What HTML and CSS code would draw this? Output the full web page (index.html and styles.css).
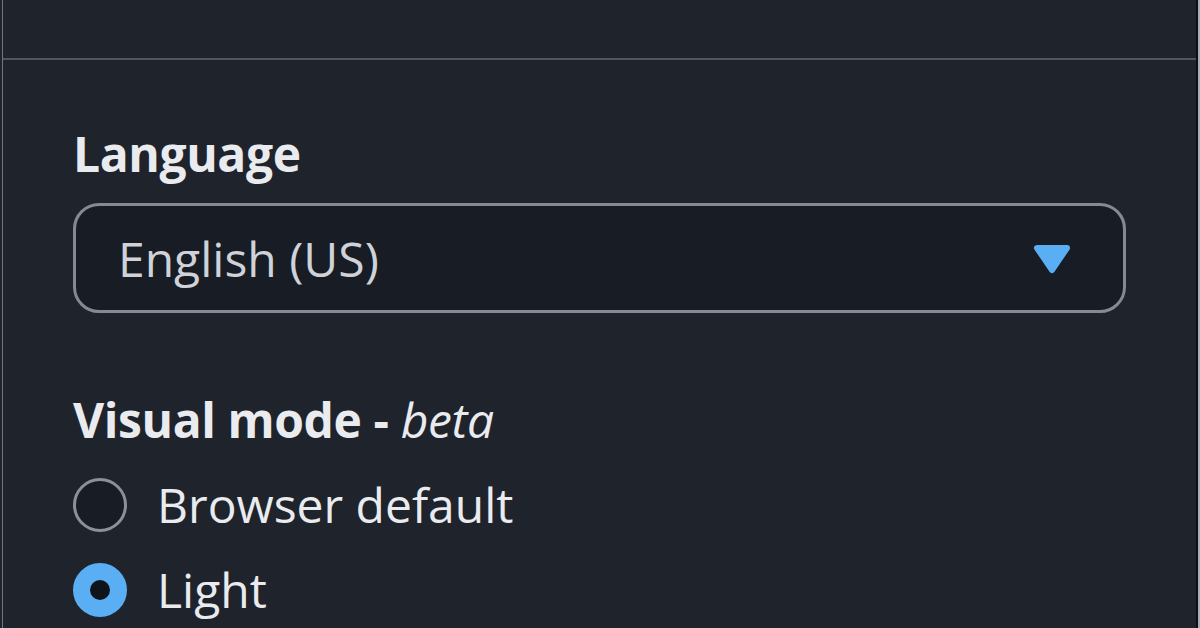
FILE: index.html
```html
<!DOCTYPE html>
<html lang="en">
<head>
<meta charset="utf-8">
<link rel="stylesheet" href="styles.css">
</head>
<body>
<div class="frame">
  <div class="gutter-left"></div>
  <div class="panel">
    <div class="panel-header"></div>
    <div class="panel-body">
      <div class="field">
        <div class="label">Language</div>
        <div class="select">
          <span class="select-value">English (US)</span>
          <svg class="caret" width="38" height="30" viewBox="0 0 38 30">
            <polygon points="4,4 34,4 19,26" fill="#5aaef3" stroke="#5aaef3" stroke-width="6" stroke-linejoin="round"/>
          </svg>
        </div>
      </div>
      <div class="field field-mode">
        <div class="label">Visual mode - <em>beta</em></div>
        <div class="radio-group">
          <div class="radio-row">
            <span class="radio"></span>
            <span class="radio-label">Browser default</span>
          </div>
          <div class="radio-row">
            <span class="radio radio-checked"></span>
            <span class="radio-label">Light</span>
          </div>
        </div>
      </div>
    </div>
  </div>
  <div class="gutter-right"></div>
</div>
</body>
</html>
```

FILE: styles.css
```css
html, body {
  margin: 0;
  padding: 0;
}
body {
  background: #1f232c;
  font-family: "Open Sans", "Noto Sans", sans-serif;
  overflow: hidden;
}
.frame {
  display: flex;
  width: 1200px;
  height: 628px;
}
.gutter-left {
  width: 2px;
  background: #1f232c;
}
.panel {
  flex: 1;
  background: #1f232c;
  border-left: 1px solid #6f7782;
  border-right: 2px solid #0c0f13;
  display: flex;
  flex-direction: column;
}
.gutter-right {
  width: 2px;
  background: #a9afb8;
}
.panel-header {
  height: 58px;
  border-bottom: 2px solid #50565f;
}
.panel-body {
  padding: 56px 70px 0 70px;
}
.label {
  font-size: 48px;
  line-height: 75px;
  font-weight: 700;
  color: #e9ebee;
  letter-spacing: -0.4px;
}
.label em {
  font-style: italic;
  font-weight: 500;
}
.select {
  margin-top: 12px;
  height: 104px;
  border: 3px solid #838a95;
  border-radius: 26px;
  background: #181c24;
  display: flex;
  align-items: center;
  justify-content: space-between;
  padding: 0 52px 0 42px;
}
.select-value {
  font-size: 48px;
  line-height: 75px;
  font-weight: 500;
  color: #cfd2d8;
}
.caret {
  display: block;
  margin-top: 2px;
}
.field-mode {
  margin-top: 69px;
}
.radio-group {
  margin-top: 10px;
  display: flex;
  flex-direction: column;
  gap: 10px;
}
.radio-row {
  display: flex;
  align-items: center;
  height: 75px;
  gap: 30px;
}
.radio {
  width: 48px;
  height: 48px;
  border: 3px solid #8a919b;
  border-radius: 50%;
  background: #181c24;
  flex: none;
}
.radio-checked {
  width: 20px;
  height: 20px;
  border: 17px solid #5aaef3;
  background: #0f131a;
}
.radio-label {
  font-size: 48px;
  line-height: 75px;
  font-weight: 500;
  color: #e9ebee;
}
```
